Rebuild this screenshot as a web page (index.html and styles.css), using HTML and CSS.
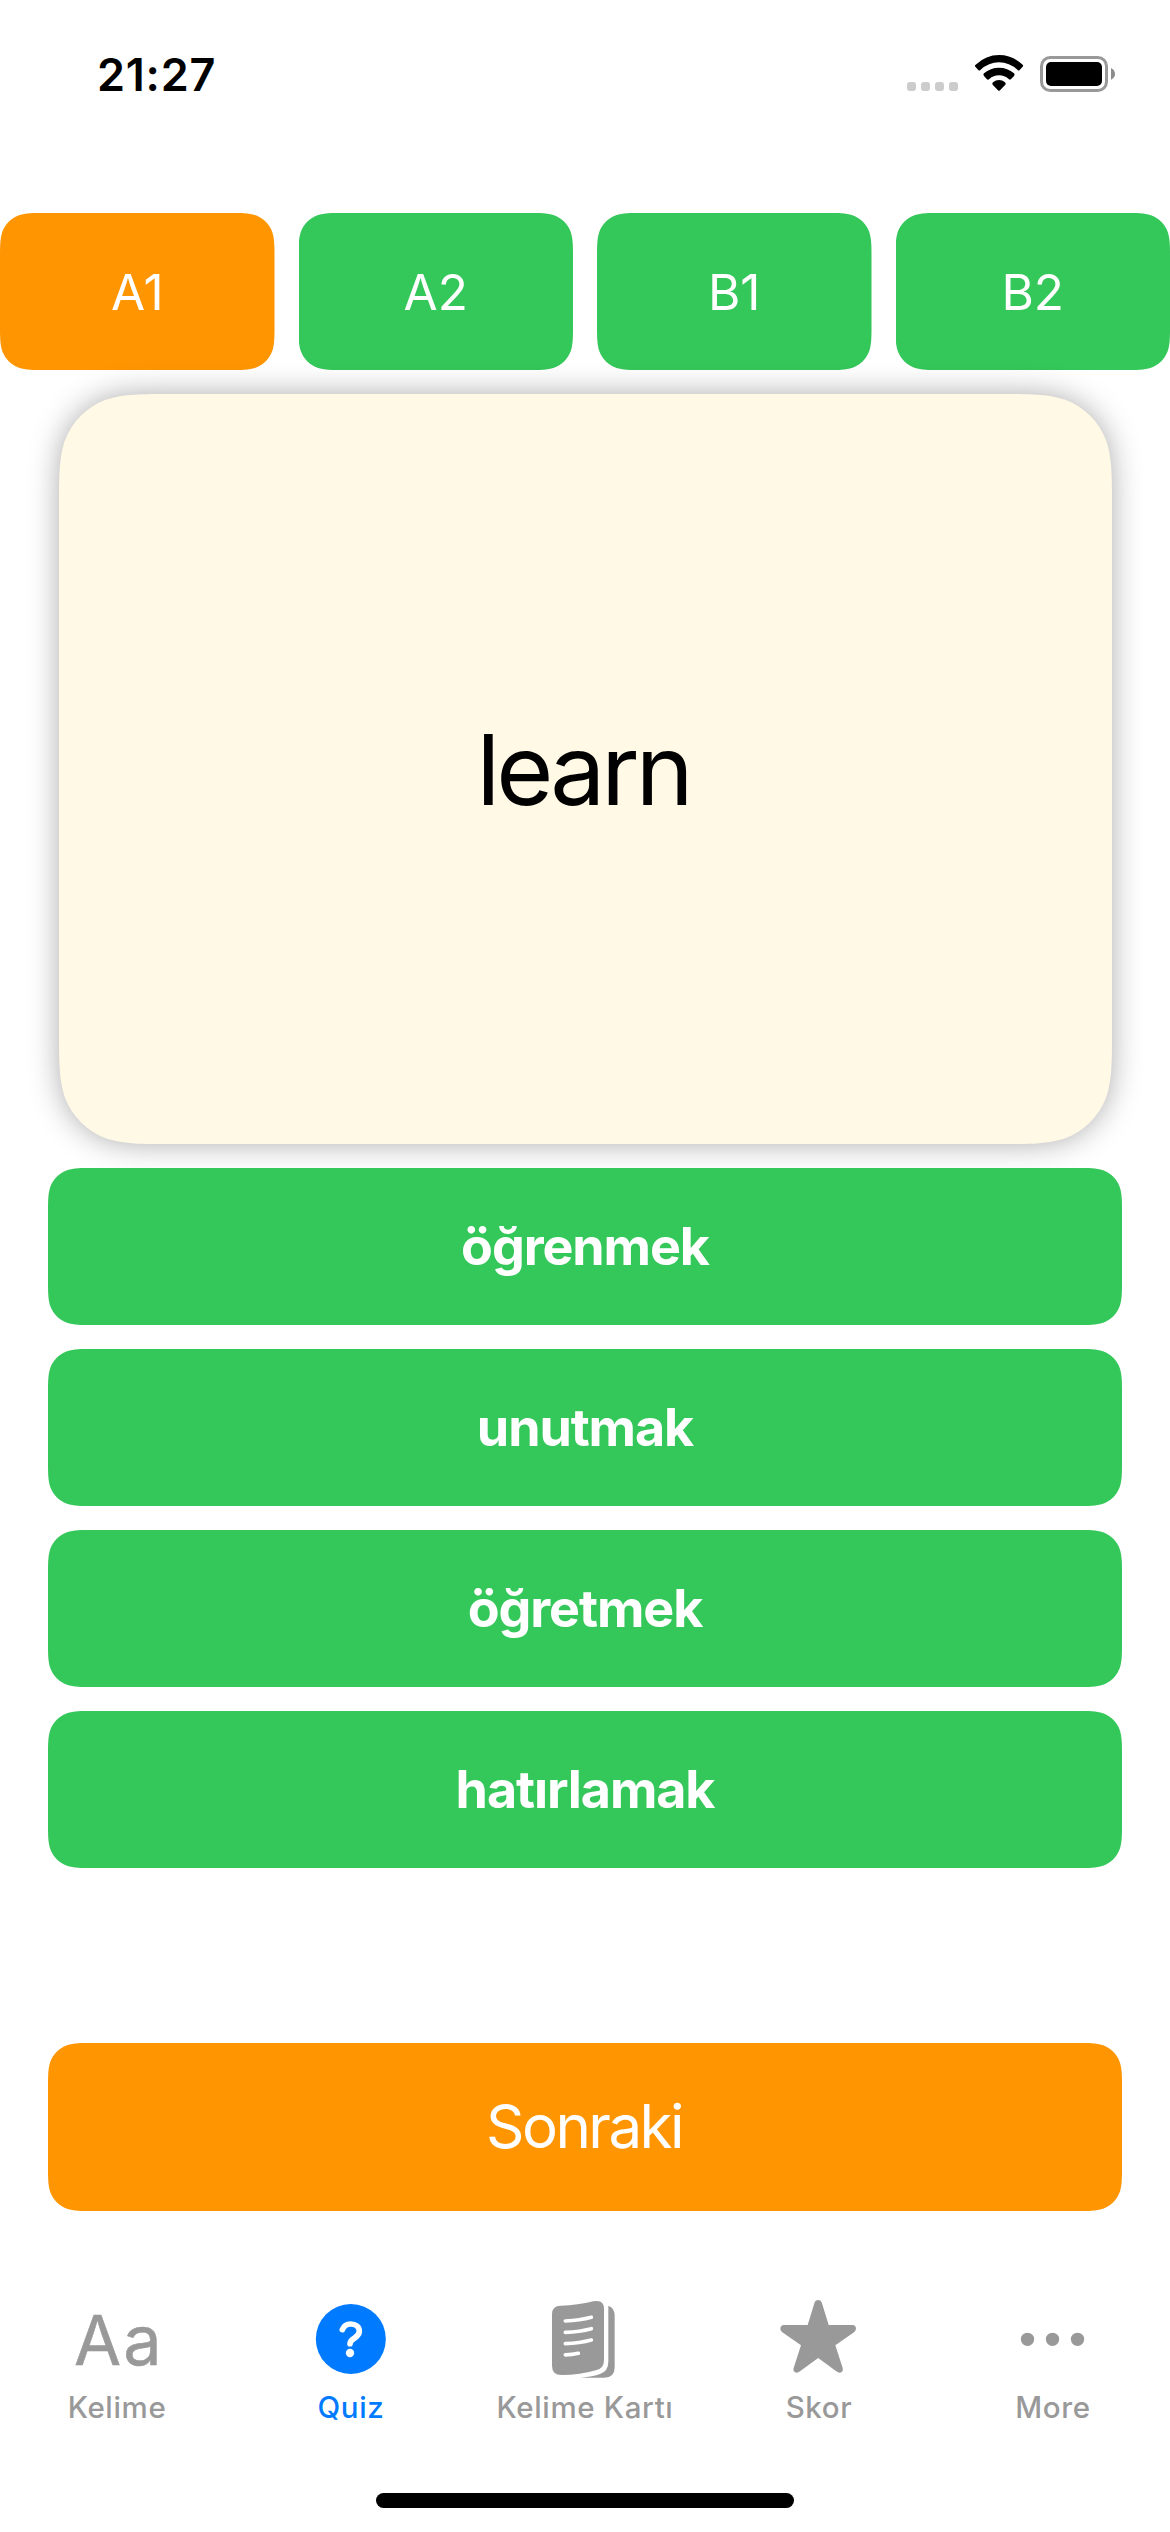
FILE: index.html
```html
<!DOCTYPE html>
<html lang="tr">
<head>
<meta charset="utf-8">
<meta name="viewport" content="width=device-width, initial-scale=1">
<title>Quiz</title>
<link rel="stylesheet" href="styles.css">
</head>
<body>
<div class="screen">
  <header class="status-bar">
    <span class="clock">21:27</span>
    <svg class="status-icons" viewBox="75 72 642 120" aria-hidden="true">
      <g fill="#ccc">
        <rect x="81" y="156" width="27" height="27" rx="9"/>
        <rect x="123" y="156" width="27" height="27" rx="9"/>
        <rect x="165" y="156" width="27" height="27" rx="9"/>
        <rect x="207" y="156" width="27" height="27" rx="9"/>
      </g>
      <path d="M287 104Q318 75 357 75Q396 75 428 104Q431 107 428 110L419 120Q416 123 413 120Q388 97 357 97Q326 97 301 120Q298 123 295 120L286 110Q283 107 287 104Z"/>
      <path d="M312 130Q331 113 357 113Q383 113 402 130Q406 134 402 138L394 146Q390 151 386 147Q374 136 357 136Q340 136 328 147Q324 151 320 147L312 138Q308 134 312 130Z"/>
      <path d="M339 157Q347 150 357 150Q367 150 375 157Q379 161 376 164L360 181Q357 184 354 181L338 164Q335 161 339 157Z"/>
      <rect x="484.500" y="82.500" width="195" height="99" rx="26" fill="none" stroke="#999" stroke-width="9"/>
      <rect x="498" y="96" width="168" height="72" rx="15"/>
      <path d="M693 114Q705 120 705 132Q705 143 693 149Z" fill="#8c8c8c"/>
    </svg>
  </header>

  <nav class="levels">
    <button class="level level-active">A1</button>
    <button class="level">A2</button>
    <button class="level">B1</button>
    <button class="level">B2</button>
  </nav>

  <main class="quiz">
    <div class="card-shadow">
      <div class="card">learn</div>
    </div>
    <div class="answers">
      <button class="wide answer">öğrenmek</button>
      <button class="wide answer">unutmak</button>
      <button class="wide answer">öğretmek</button>
      <button class="wide answer">hatırlamak</button>
    </div>
    <button class="wide next">Sonraki</button>
  </main>

  <nav class="tab-bar">
    <a class="tab">
      <svg class="tab-icon" viewBox="96 75 270 270" aria-hidden="true">
        <text class="aa" x="102" y="284" textLength="263">Aa</text>
      </svg>
      <span>Kelime</span>
    </a>
    <a class="tab tab-active">
      <svg class="tab-icon" viewBox="798 75 270 270" aria-hidden="true">
        <circle cx="932.500" cy="207" r="105"/>
        <path class="cut" stroke-width="17" d="M907 179C911 168 920 162 932 162C947 162 958 170 958 184C958 206 930 203 930 221"/>
        <circle cx="930" cy="249" r="12.500" fill="#fff"/>
      </svg>
      <span>Quiz</span>
    </a>
    <a class="tab">
      <svg class="tab-icon" viewBox="240 75 270 270" aria-hidden="true">
        <path d="M302 107Q354 106 400 94Q432 87 432 117V270Q432 294 410 300Q360 315 305 315Q276 315 276 287V133Q276 107 302 107Z"/>
        <path d="M445 107Q464 114 464 136V292Q464 323 433 323H362Q400 320 420 312Q445 303 445 275Z"/>
        <path class="cut" stroke-width="11" d="M316 153Q360 151 394 142M316 187Q360 185 394 176M316 221Q360 219 394 210M316 254.500Q336 254.500 355 250"/>
      </svg>
      <span>Kelime Kartı</span>
    </a>
    <a class="tab">
      <svg class="tab-icon" viewBox="102 75 270 270" aria-hidden="true">
        <path d="M224 97Q227 90 234.500 90Q242 90 245 97L266 165H337Q348 166 348 176Q347 182 342 187L286 226L308 294Q311 307 299 308Q294 308 289 304L234.500 264L180 304Q176 308 169 308Q158 306 161 294L183 226L127 187Q121 182 121 176Q122 165 132 165H203Z"/>
      </svg>
      <span>Skor</span>
    </a>
    <a class="tab">
      <svg class="tab-icon" viewBox="804 75 270 270" aria-hidden="true">
        <circle cx="862.500" cy="208" r="20"/>
        <circle cx="937.500" cy="208" r="20"/>
        <circle cx="1012.500" cy="208" r="20"/>
      </svg>
      <span>More</span>
    </a>
  </nav>

  <div class="home-indicator"></div>
</div>
</body>
</html>
```
FILE: styles.css
```css
* {
  box-sizing: border-box;
}

body {
  margin: 0;
  background: #fff;
  font-family: Inter, "Liberation Sans", sans-serif;
}

button {
  border: 0;
  padding: 0;
  font: inherit;
  color: #fff;
}

.screen {
  width: 1170px;
  height: 2532px;
  display: flex;
  flex-direction: column;
  overflow: hidden;
}

/* Status bar */
.status-bar {
  height: 213px;
  padding: 54px 51px 0 97px;
  display: flex;
  justify-content: space-between;
  align-items: flex-start;
}

.clock {
  font-size: 45px;
  font-weight: 600;
  line-height: 41px;
  letter-spacing: 0.75px;
}

.status-icons {
  width: 214px;
  height: 40px;
}

/* Level picker */
.levels {
  display: grid;
  grid-template-columns: repeat(4, 1fr);
  gap: 24px;
}

.level {
  height: 157px;
  background: #34c759;
  font-size: 49.5px;
  /* continuous corners, radius 30px */
  clip-path: path("M45.86 0H228.64c13.21 0 19.81 0 26.92 2.25c7.76 2.82 13.87 8.93 16.69 16.69c2.25 7.11 2.25 13.71 2.25 26.92V111.14c0 13.21 0 19.81-2.25 26.92c-2.82 7.76-8.93 13.87-16.69 16.69c-7.11 2.25-13.71 2.25-26.92 2.25H45.86c-13.21 0-19.81 0-26.92-2.25c-7.76-2.82-13.87-8.93-16.69-16.69c-2.25-7.11-2.25-13.71-2.25-26.92V45.86c0-13.21 0-19.81 2.25-26.92c2.82-7.76 8.93-13.87 16.69-16.69c7.11-2.25 13.71-2.25 26.92-2.25z");
}

.level-active {
  background: #ff9500;
}

/* Quiz */
.quiz {
  display: flex;
  flex-direction: column;
  padding: 24px 48px 0;
}

.card-shadow {
  margin: 0 10px 24px 11px;
  filter: drop-shadow(0 0 15px rgba(0, 0, 0, 0.33));
}

.card {
  width: 1053px;
  height: 750px;
  padding-right: 5px;
  display: flex;
  align-items: center;
  justify-content: center;
  background: #fff9e6;
  color: #000;
  font-size: 98px;
  letter-spacing: -4px;
  /* continuous corners, radius 75px */
  clip-path: path("M114.65 0H938.35c33.01 0 49.52 0 67.29 5.62c19.4 7.06 34.68 22.34 41.74 41.74c5.62 17.77 5.62 34.28 5.62 67.29V635.35c0 33.01 0 49.52-5.62 67.29c-7.06 19.4-22.34 34.68-41.74 41.74c-17.77 5.62-34.28 5.62-67.29 5.62H114.65c-33.01 0-49.52 0-67.29-5.62c-19.4-7.06-34.68-22.34-41.74-41.74c-5.62-17.77-5.62-34.28-5.62-67.29V114.65c0-33.01 0-49.52 5.62-67.29c7.06-19.4 22.34-34.68 41.74-41.74c17.77-5.62 34.28-5.62 67.29-5.62z");
}

.answers {
  position: relative;
  display: grid;
  gap: 24px;
}

.wide {
  width: 1074px;
}

.answer {
  height: 157px;
  background: #34c759;
  font-size: 52px;
  font-weight: 700;
  letter-spacing: -1.1px;
  clip-path: path("M45.86 0H1028.14c13.21 0 19.81 0 26.92 2.25c7.76 2.82 13.87 8.93 16.69 16.69c2.25 7.11 2.25 13.71 2.25 26.92V111.14c0 13.21 0 19.81-2.25 26.92c-2.82 7.76-8.93 13.87-16.69 16.69c-7.11 2.25-13.71 2.25-26.92 2.25H45.86c-13.21 0-19.81 0-26.92-2.25c-7.76-2.82-13.87-8.93-16.69-16.69c-2.25-7.11-2.25-13.71-2.25-26.92V45.86c0-13.21 0-19.81 2.25-26.92c2.82-7.76 8.93-13.87 16.69-16.69c7.11-2.25 13.71-2.25 26.92-2.25z");
}

.next {
  height: 168px;
  margin-top: 175px;
  padding: 0 2px 2px 0;
  background: #ff9500;
  font-size: 60px;
  letter-spacing: -2.5px;
  clip-path: path("M45.86 0H1028.14c13.21 0 19.81 0 26.92 2.25c7.76 2.82 13.87 8.93 16.69 16.69c2.25 7.11 2.25 13.71 2.25 26.92V122.14c0 13.21 0 19.81-2.25 26.92c-2.82 7.76-8.93 13.87-16.69 16.69c-7.11 2.25-13.71 2.25-26.92 2.25H45.86c-13.21 0-19.81 0-26.92-2.25c-7.76-2.82-13.87-8.93-16.69-16.69c-2.25-7.11-2.25-13.71-2.25-26.92V45.86c0-13.21 0-19.81 2.25-26.92c2.82-7.76 8.93-13.87 16.69-16.69c7.11-2.25 13.71-2.25 26.92-2.25z");
}

/* Tab bar */
.tab-bar {
  display: grid;
  grid-template-columns: repeat(5, 1fr);
  margin-top: 84px;
}

.tab {
  display: flex;
  flex-direction: column;
  align-items: center;
  gap: 4px;
  color: #999;
  font-size: 29.5px;
  font-weight: 500;
  line-height: 36px;
  letter-spacing: 0.65px;
}

.tab-active {
  color: #007aff;
}

.tab-icon {
  width: 90px;
  height: 90px;
  fill: currentColor;
}

.aa {
  font-size: 205px;
  font-weight: 400;
  letter-spacing: 0;
  stroke: currentColor;
  stroke-width: 1.5px;
  stroke-linejoin: round;
}

.cut {
  fill: none;
  stroke: #fff;
  stroke-linecap: round;
}

.home-indicator {
  width: 418px;
  height: 15px;
  margin: auto auto 24px;
  border-radius: 8px;
  background: #000;
}
```
